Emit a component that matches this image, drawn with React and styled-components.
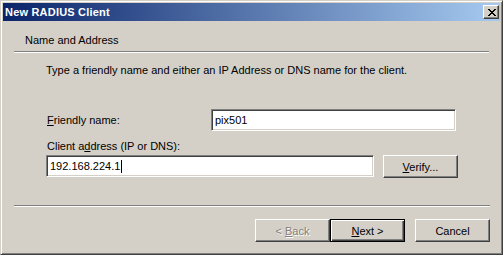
import React from 'react'
import styled, { createGlobalStyle } from 'styled-components'

const Global = createGlobalStyle`
  html, body { margin: 0; padding: 0; background: #d4d0c8; }
  body { font-family: "Liberation Sans", Arial, sans-serif; font-size: 11px; color: #000; }
  * { box-sizing: border-box; }
`

const App = () => {
  return (
    <>
      <Global />
      <Window>
        <TitleBar>
          <Title>New RADIUS Client</Title>
          <CloseButton>
            <svg width="8" height="7" viewBox="0 0 8 7">
              <path d="M0 0h2v1h1v1h2v-1h1v-1h2v1h-1v1h-1v1h-1v1h1v1h1v1h1v1h-2v-1h-1v-1h-2v1h-1v1h-2v-1h1v-1h1v-1h1v-1h-1v-1h-1v-1h-1z" fill="#000" />
            </svg>
          </CloseButton>
        </TitleBar>
        <Content>
          <Header>Name and Address</Header>
          <Separator />
          <Body>
            <Intro>Type a friendly name and either an IP Address or DNS name for the client.</Intro>
            <FieldRow>
              <Label><u>F</u>riendly name:</Label>
              <TextBox width={245}>pix501</TextBox>
            </FieldRow>
            <StackedLabel>Client a<u>d</u>dress (IP or DNS):</StackedLabel>
            <AddressRow>
              <TextBox width={328}>192.168.224.1<Caret /></TextBox>
              <Button><span><u>V</u>erify...</span></Button>
            </AddressRow>
          </Body>
          <Separator bottom />
          <ButtonRow>
            <Button disabled><span>&lt; <u>B</u>ack</span></Button>
            <Button primary><span><u>N</u>ext &gt;</span></Button>
            <Button gap><span>Cancel</span></Button>
          </ButtonRow>
        </Content>
      </Window>
    </>
  )
}

const Window = styled.div`
  width: 503px;
  height: 255px;
  display: flex;
  flex-direction: column;
  padding: 2px;
  background: #d4d0c8;
  border: 1px solid;
  border-color: #d4d0c8 #404040 #404040 #d4d0c8;
  box-shadow: inset 1px 1px #fff, inset -1px -1px #808080;
`

const TitleBar = styled.div`
  height: 18px;
  display: flex;
  align-items: center;
  justify-content: space-between;
  padding: 0 1px 0 2px;
  background: linear-gradient(to right, #0a246a, #a6caf0);
`

const Title = styled.span`
  color: #fff;
  font-weight: bold;
  font-size: 11px;
  letter-spacing: 0.2px;
`

const CloseButton = styled.div`
  width: 16px;
  height: 14px;
  display: flex;
  align-items: center;
  justify-content: center;
  padding-left: 1px;
  background: #d4d0c8;
  border: 1px solid;
  border-color: #fff #404040 #404040 #fff;
  box-shadow: inset -1px -1px #808080;
`

const Content = styled.div`
  flex: 1;
  display: flex;
  flex-direction: column;
  padding: 0 10px 0 11px;
`

const Header = styled.div`
  height: 30px;
  padding: 13px 0 0 11px;
  line-height: 13px;
`

const Separator = styled.div`
  height: 2px;
  margin-right: ${p => (p.bottom ? 0 : 1)}px;
  border-top: 1px solid #808080;
  border-bottom: 1px solid #fff;
`

const Body = styled.div`
  height: 152px;
  display: flex;
  flex-direction: column;
  padding: 11px 0 0 32px;
`

const Intro = styled.div`
  line-height: 13px;
`

const FieldRow = styled.div`
  display: flex;
  align-items: center;
  margin-top: 32px;
  height: 22px;
`

const Label = styled.div`
  width: 165px;
  line-height: 13px;
  padding-left: 1px;
`

const StackedLabel = styled.div`
  margin-top: 9px;
  padding-left: 1px;
  line-height: 13px;
`

const AddressRow = styled.div`
  display: flex;
  gap: 9px;
  margin-top: 2px;
`

const TextBox = styled.div`
  width: ${p => p.width}px;
  height: 22px;
  display: flex;
  align-items: center;
  padding-left: 3px;
  background: #fff;
  border: 1px solid;
  border-color: #808080 #fff #fff #808080;
  box-shadow: inset 1px 1px #404040, inset -1px -1px #d4d0c8;
  font-size: 11px;
`

const Caret = styled.span`
  display: inline-block;
  width: 1px;
  height: 13px;
  margin-left: 1px;
  background: #000;
`

const ButtonRow = styled.div`
  display: flex;
  justify-content: flex-end;
  padding-top: 12px;
`

const Button = styled.button`
  width: 75px;
  height: 23px;
  margin-left: ${p => (p.gap ? 10 : 0)}px;
  padding: 0;
  display: flex;
  align-items: center;
  justify-content: center;
  font-family: "Liberation Sans", Arial, sans-serif;
  font-size: 11px;
  color: ${p => (p.disabled ? '#808080' : '#000')};
  text-shadow: ${p => (p.disabled ? '1px 1px #fff' : 'none')};
  background: #d4d0c8;
  border: 1px solid;
  border-color: ${p => (p.primary ? '#000' : '#fff #404040 #404040 #fff')};
  box-shadow: ${p =>
    p.primary
      ? 'inset 1px 1px #fff, inset -1px -1px #404040, inset -2px -2px #808080'
      : 'inset -1px -1px #808080'};
`

export default App
